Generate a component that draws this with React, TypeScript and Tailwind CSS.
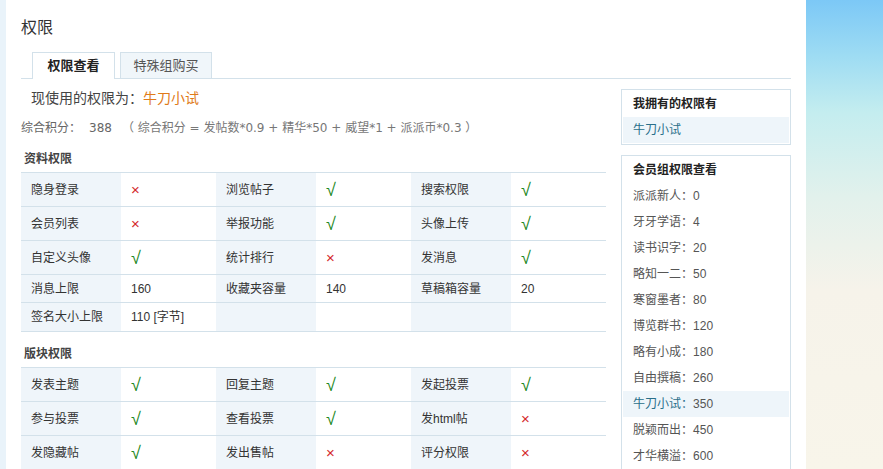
import React from "react";

type Cell = { label: string; value: "yes" | "no" | string };

const PROFILE_ROWS: { h: string; cells: Cell[] }[] = [
  { h: "h-[34px]", cells: [{ label: "隐身登录", value: "no" }, { label: "浏览帖子", value: "yes" }, { label: "搜索权限", value: "yes" }] },
  { h: "h-[34px]", cells: [{ label: "会员列表", value: "no" }, { label: "举报功能", value: "yes" }, { label: "头像上传", value: "yes" }] },
  { h: "h-[34px]", cells: [{ label: "自定义头像", value: "yes" }, { label: "统计排行", value: "no" }, { label: "发消息", value: "yes" }] },
  { h: "h-[28px]", cells: [{ label: "消息上限", value: "160" }, { label: "收藏夹容量", value: "140" }, { label: "草稿箱容量", value: "20" }] },
  { h: "h-[29px]", cells: [{ label: "签名大小上限", value: "110 [字节]" }, { label: "", value: "" }, { label: "", value: "" }] },
];

const BOARD_ROWS: { h: string; cells: Cell[] }[] = [
  { h: "h-[34px]", cells: [{ label: "发表主题", value: "yes" }, { label: "回复主题", value: "yes" }, { label: "发起投票", value: "yes" }] },
  { h: "h-[34px]", cells: [{ label: "参与投票", value: "yes" }, { label: "查看投票", value: "yes" }, { label: "发html帖", value: "no" }] },
  { h: "h-[34px]", cells: [{ label: "发隐藏帖", value: "yes" }, { label: "发出售帖", value: "no" }, { label: "评分权限", value: "no" }] },
];

const GROUPS = [
  ["派派新人", "0"],
  ["牙牙学语", "4"],
  ["读书识字", "20"],
  ["略知一二", "50"],
  ["寒窗墨者", "80"],
  ["博览群书", "120"],
  ["略有小成", "180"],
  ["自由撰稿", "260"],
  ["牛刀小试", "350"],
  ["脱颖而出", "450"],
  ["才华横溢", "600"],
];

function Value({ v }: { v: string }) {
  if (v === "yes") return <span className="text-[18px] leading-none text-[#1f8a1f]">√</span>;
  if (v === "no") return <span className="text-[15px] leading-none text-[#d42a2a]">×</span>;
  return <span>{v}</span>;
}

function PermTable({ rows }: { rows: { h: string; cells: Cell[] }[] }) {
  return (
    <div className="border-t border-[#d3e1ea]">
      {rows.map((row, i) => (
        <div key={i} className={`flex border-b border-[#d3e1ea] ${row.h}`}>
          {row.cells.map((c, j) => (
            <React.Fragment key={j}>
              <div className="flex w-[100px] items-center bg-[#eff5fa] pl-[10px]">{c.label}</div>
              <div className="flex w-[95px] items-center pl-[10px]">
                <Value v={c.value} />
              </div>
            </React.Fragment>
          ))}
        </div>
      ))}
    </div>
  );
}

export default function App() {
  return (
    <div
      className="flex h-[469px] w-[883px] overflow-hidden text-[12px] text-[#333]"
      style={{ fontFamily: '"Liberation Sans", "Noto Sans CJK SC", sans-serif' }}
    >
      <div className="w-[6px] bg-[#e9f3fa]" />
      <div className="w-[800px] bg-white pl-[15px] pr-[15px]">
        <div className="mt-[18px] flex h-[20px] items-center text-[16px] text-[#333]">权限</div>

        {/* tabs */}
        <div className="mt-[14px] flex h-[27px] items-end border-b border-[#d3e1ea] pl-[11px]">
          <div className="-mb-px flex h-[27px] w-[83px] items-center justify-center border border-b-0 border-[#d3e1ea] bg-white text-[13px] font-bold text-[#222]">
            权限查看
          </div>
          <div className="ml-[5px] flex h-[26px] w-[92px] items-center justify-center border border-b-0 border-[#d3e1ea] bg-[#f0f6fa] text-[13px] text-[#555]">
            特殊组购买
          </div>
        </div>

        <div className="flex">
          {/* main column */}
          <div className="w-[585px]">
            <div className="mt-[8px] flex h-[22px] items-center pl-[10px] text-[14px] text-[#444]">
              现使用的权限为：<span className="text-[#e07b1a]">牛刀小试</span>
            </div>
            <div
              className="mt-[9px] flex h-[20px] items-center text-[12px] text-[#666]"
              style={{ fontFamily: '"DejaVu Sans", "Noto Sans CJK SC", sans-serif' }}
            >
              <span>综合积分：</span>
              <span className="ml-[8px]">388</span>
              <span className="ml-[10px] text-[#777]">（ 综合积分 = 发帖数*0.9 + 精华*50 + 威望*1 + 派派币*0.3 ）</span>
            </div>
            <div className="mt-[11px] flex h-[20px] items-center pl-[3px] font-bold text-[#444]">资料权限</div>
            <div className="mt-[3px]">
              <PermTable rows={PROFILE_ROWS} />
            </div>
            <div className="mt-[12px] flex h-[20px] items-center pl-[3px] font-bold text-[#444]">版块权限</div>
            <div className="mt-[3px]">
              <PermTable rows={BOARD_ROWS} />
            </div>
          </div>

          {/* sidebar */}
          <div className="ml-[15px] w-[170px]">
            <div className="mt-[10px] border border-[#d3e1ea] p-px">
              <div className="flex h-[26px] items-center pl-[10px] font-bold text-[#222]">我拥有的权限有</div>
              <div className="flex h-[26px] items-center bg-[#eef5fa] pl-[10px] text-[#2a6f8a]">牛刀小试</div>
            </div>
            <div className="mt-[10px] h-[400px] border border-[#d3e1ea] p-px">
              <div className="flex h-[26px] items-center pl-[10px] font-bold text-[#222]">会员组权限查看</div>
              {GROUPS.map(([name, n]) => {
                const active = name === "牛刀小试";
                return (
                  <div
                    key={name}
                    className={`flex h-[26px] items-center pl-[10px] ${active ? "bg-[#eef5fa] text-[#2a6f8a]" : "text-[#555]"}`}
                  >
                    {name}：<span className="text-[#555]">{n}</span>
                  </div>
                );
              })}
            </div>
          </div>
        </div>
      </div>
      <div className="flex-1 bg-[linear-gradient(to_bottom,#7cc8f6_0%,#9edcf3_12%,#c4edef_24%,#e2f1ec_42%,#f6f3ea_62%,#f8f5ea_100%)]" />
    </div>
  );
}
